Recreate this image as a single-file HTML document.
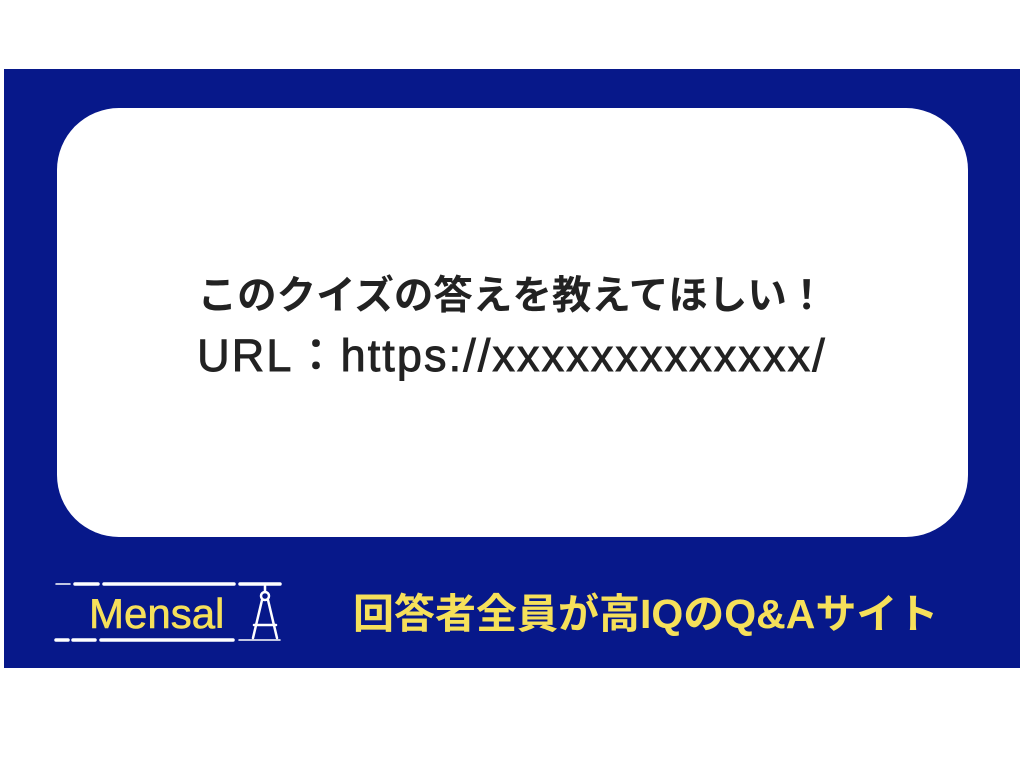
<!DOCTYPE html>
<html><head><meta charset="utf-8"><style>
body{margin:0;width:1024px;height:768px;background:#fff;position:relative;overflow:hidden;font-family:"Liberation Sans","Noto Sans CJK JP",sans-serif}
.bg{position:absolute;left:4px;top:69px;width:1016px;height:599px;background:#07188a}
.card{position:absolute;left:57px;top:108px;width:911px;height:429px;background:#fff;border-radius:62px}
.t1{position:absolute;left:0;width:1024px;top:273px;text-align:center;font-size:39.5px;font-weight:bold;color:#222;line-height:1.2;white-space:nowrap}
.t2{position:absolute;left:0;width:1024px;top:329px;text-align:center;font-size:45px;letter-spacing:2.1px;color:#222;-webkit-text-stroke:0.9px #222;line-height:1.2;white-space:nowrap}
.foot{position:absolute;left:353px;top:590px;font-size:41px;font-weight:bold;color:#f6e05a;white-space:nowrap;line-height:1.2}
.mensal{position:absolute;left:89px;top:589px;font-size:42px;color:#f6e05a;-webkit-text-stroke:0.6px #f6e05a;line-height:1.2}
</style></head><body>
<div class="bg"></div>
<div class="card"></div>
<div class="t1">このクイズの答えを教えてほしい！</div>
<div class="t2">URL：https://xxxxxxxxxxxxx/</div>
<div class="mensal">Mensal</div>
<svg style="position:absolute;left:0;top:0" width="1024" height="768">
<g stroke="#fff" stroke-width="3.5" stroke-linecap="round">
<line x1="56" y1="584" x2="70" y2="584" stroke-width="1.5"/>
<line x1="75" y1="584" x2="98" y2="584"/>
<line x1="104" y1="584" x2="234" y2="584"/>
<line x1="240" y1="584" x2="280" y2="584"/>
<line x1="56" y1="640" x2="68" y2="640"/>
<line x1="73" y1="640" x2="95" y2="640"/>
<line x1="101" y1="640" x2="233" y2="640"/>
<line x1="239" y1="640" x2="280" y2="640" stroke-width="1.5"/>
</g>
<g stroke="#fff" stroke-width="2.5" fill="none" stroke-linecap="round">
<circle cx="265" cy="596" r="4"/>
<line x1="265" y1="586" x2="265" y2="592"/>
<line x1="262" y1="600" x2="253" y2="638"/>
<line x1="268" y1="600" x2="277" y2="638"/>
<line x1="254" y1="625" x2="276" y2="625"/>
</g>
</svg>
<div class="foot">回答者全員が高IQのQ&amp;Aサイト</div>
</body></html>
